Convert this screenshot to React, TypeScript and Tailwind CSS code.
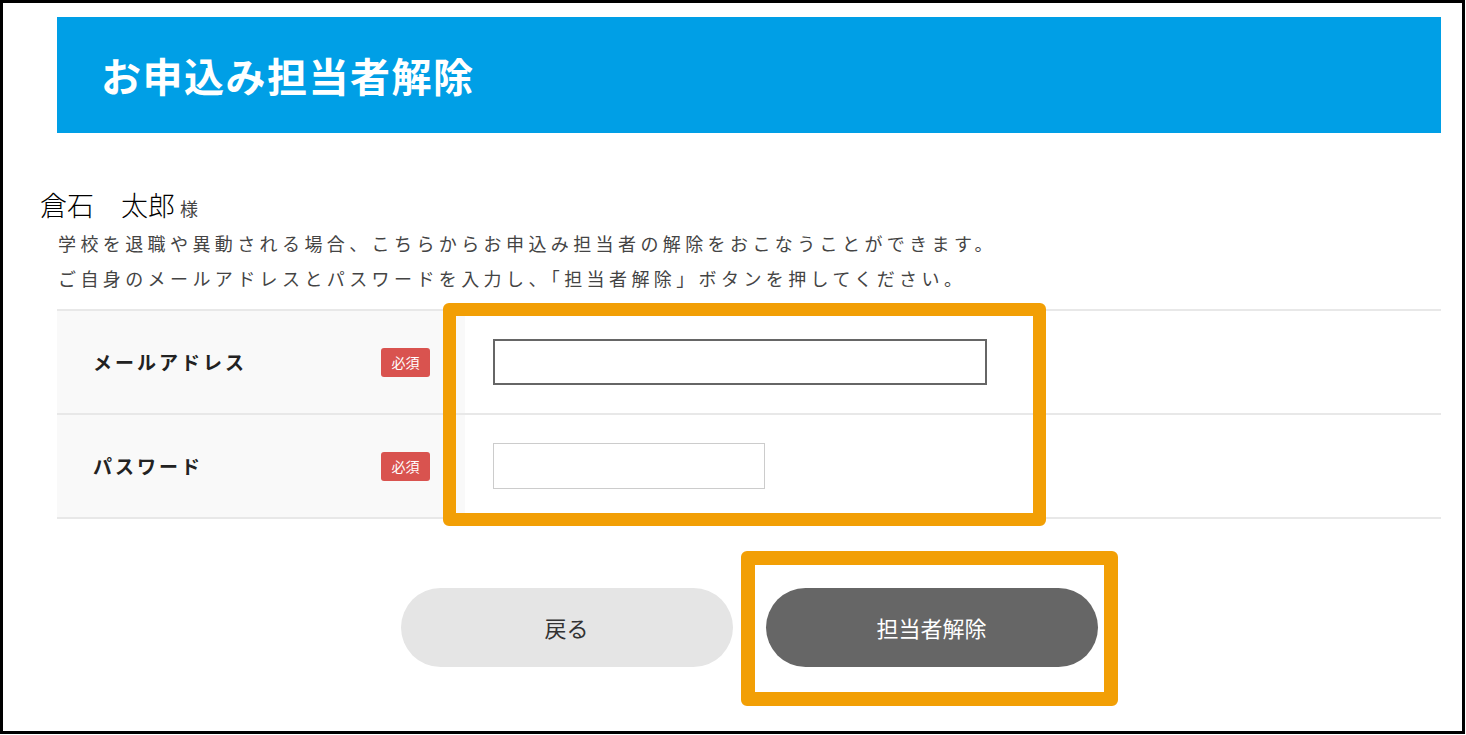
import React from "react";

const jp = "font-['Noto_Sans_CJK_JP','Noto_Sans',sans-serif]";

function RequiredBadge() {
  return (
    <span className="flex h-[29px] w-[49px] items-center justify-center rounded-[3px] bg-[#d9534f] text-[14px] text-white">
      必須
    </span>
  );
}

function FormRow({ label, children }: { label: string; children: React.ReactNode }) {
  return (
    <div className="flex h-[104px] border-b-2 border-[#e8e8e8]">
      <div className="flex w-[408px] items-center justify-between bg-[#f9f9f9] pl-[36px] pr-[35px]">
        <span className="text-[19px] font-bold tracking-[3px] text-[#222]">{label}</span>
        <RequiredBadge />
      </div>
      <div className="flex flex-1 items-center pl-[28px]">{children}</div>
    </div>
  );
}

export default function App() {
  return (
    <div className={`relative h-[734px] w-[1465px] border-[3px] border-black bg-white ${jp}`}>
      {/* Header */}
      <div className="pl-[54px] pt-[14px]">
        <div className="flex h-[116px] w-[1384px] items-center bg-[#009fe6] pl-[44px]">
          <h1 className="text-[40px] font-bold tracking-[1.5px] text-white">お申込み担当者解除</h1>
        </div>
      </div>

      {/* Greeting */}
      <div className="mt-[57px] pl-[37px] leading-[30px]">
        <span className="text-[27px] font-light text-black">倉石　太郎</span>
        <span className="ml-[5px] text-[18px] text-[#444]">様</span>
      </div>

      <div className="mt-[2px] pl-[55px] text-[18px] leading-[35px] tracking-[4.4px] text-[#444]">
        <p>学校を退職や異動される場合、こちらからお申込み担当者の解除をおこなうことができます。</p>
        <p>ご自身のメールアドレスとパスワードを入力し、「担当者解除」ボタンを押してください。</p>
      </div>

      {/* Form table */}
      <div className="ml-[54px] mt-[13px] w-[1384px] border-t-2 border-[#e8e8e8]">
        <FormRow label="メールアドレス">
          <input type="email" className="h-[46px] w-[494px] border-2 border-[#666] bg-white outline-none" />
        </FormRow>
        <FormRow label="パスワード">
          <input type="password" className="h-[46px] w-[272px] border border-[#ccc] bg-white outline-none" />
        </FormRow>
      </div>

      {/* Buttons */}
      <div className="ml-[54px] mt-[69px] flex w-[1384px] justify-center gap-[33px]">
        <button className="h-[79px] w-[332px] rounded-full bg-[#e5e5e5] text-[22px] text-[#333]">戻る</button>
        <button className="h-[79px] w-[332px] rounded-full bg-[#666] text-[22px] text-white">担当者解除</button>
      </div>

      {/* Annotation highlights */}
      <div className="pointer-events-none absolute left-[440px] top-[300px] h-[223px] w-[603px] rounded-[6px] border-[13px] border-[#f29f05]" />
      <div className="pointer-events-none absolute left-[738px] top-[548px] h-[155px] w-[377px] rounded-[6px] border-[14px] border-[#f29f05]" />
    </div>
  );
}
